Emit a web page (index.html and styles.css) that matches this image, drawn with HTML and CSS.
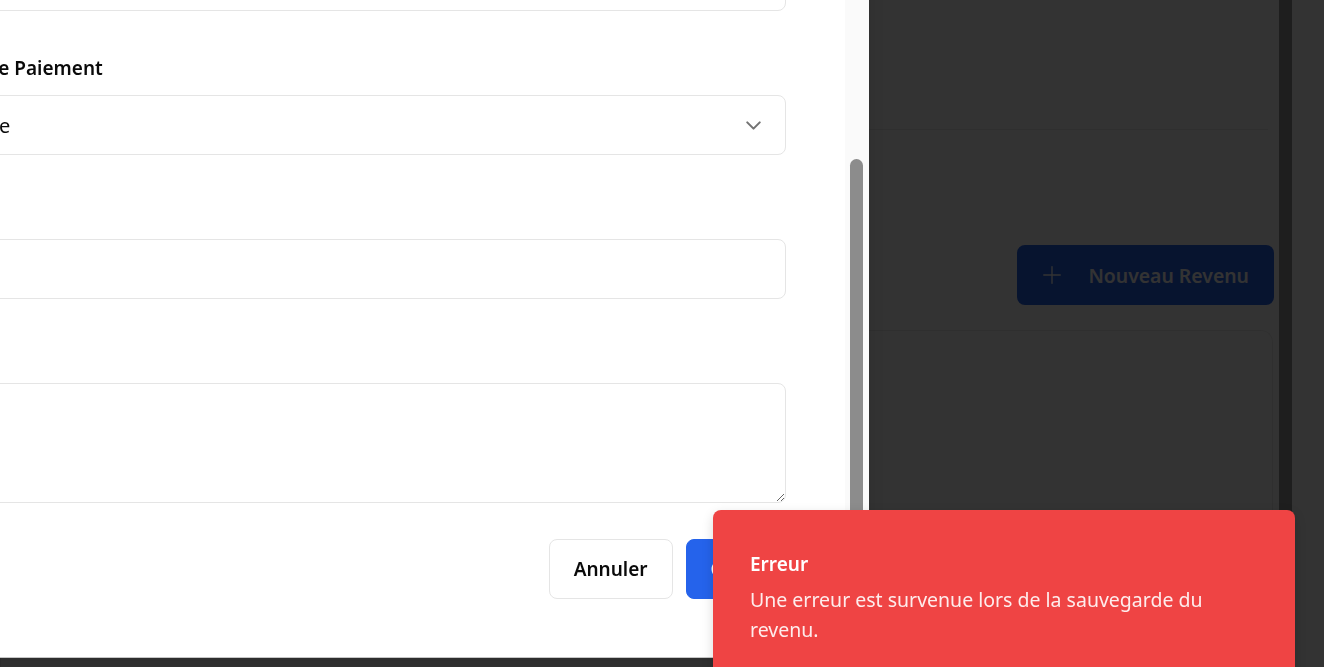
FILE: index.html
```html
<!DOCTYPE html>
<html lang="fr">
<head>
<meta charset="utf-8">
<title>Revenus</title>
<link rel="stylesheet" href="styles.css">
</head>
<body>
<div class="app">
  <main class="main">
    <div class="topbar"></div>
    <div class="toolbar">
      <button class="btn-new" type="button">
        <svg class="plus" viewBox="0 0 24 24" width="22" height="22" aria-hidden="true"><path d="M12 3v18M3 12h18"/></svg>
        <span>Nouveau Revenu</span>
      </button>
    </div>
    <div class="table-card"></div>
  </main>
  <div class="rail"></div>
  <div class="gutter"></div>
</div>

<div class="overlay"></div>

<div class="modal" role="dialog">
  <form class="form">
    <div class="field">
      <label class="label">Montant</label>
      <div class="input"></div>
    </div>
    <div class="field">
      <label class="label">Mode de Paiement</label>
      <div class="select">
        <span class="select-value">Chèque</span>
        <svg class="chevron" viewBox="0 0 24 24" width="25" height="25" aria-hidden="true"><path d="m6 9 6 6 6-6"/></svg>
      </div>
    </div>
    <div class="field">
      <label class="label">Client</label>
      <input class="input" type="text">
    </div>
    <div class="field">
      <label class="label">Notes</label>
      <textarea class="textarea"></textarea>
    </div>
    <div class="footer">
      <button class="btn btn-outline" type="button">Annuler</button>
      <button class="btn btn-primary" type="button">Créer</button>
    </div>
  </form>
  <div class="scrollbar"><div class="thumb"></div></div>
</div>

<div class="toast" role="alert">
  <div class="toast-title">Erreur</div>
  <div class="toast-desc">Une erreur est survenue lors de la sauvegarde du revenu.</div>
</div>
</body>
</html>
```

FILE: styles.css
```css
* { box-sizing: border-box; }

html, body {
  margin: 0;
  width: 1324px;
  height: 667px;
  overflow: hidden;
  font-family: "Noto Sans", "Open Sans", sans-serif;
  color: #0a0a0a;
  background: #fff;
}

/* background application */
.app {
  display: flex;
  height: 667px;
}
.main {
  flex: 1;
  display: flex;
  flex-direction: column;
}
.topbar {
  height: 130px;
  margin-right: 11px;
  border-bottom: 1px solid #e8e8e8;
}
.toolbar {
  height: 200px;
  display: flex;
  justify-content: flex-end;
  align-items: flex-start;
  padding-top: 115px;
  padding-right: 5px;
}
.btn-new {
  display: flex;
  align-items: center;
  gap: 25px;
  height: 60px;
  padding: 0 25px 0 24px;
  border: 0;
  border-radius: 8px;
  background: #2563eb;
  color: #fff;
  font-family: inherit;
  font-size: 19.4px;
  font-weight: 600;
}
.plus {
  fill: none;
  stroke: #fff;
  stroke-width: 1.5;
  stroke-linecap: round;
}
.table-card {
  flex: 1;
  margin-right: 6px;
  border: 1px solid #ececec;
  border-bottom: 0;
  border-radius: 12px 12px 0 0;
}
.rail {
  width: 13px;
  background: #969696;
}
.gutter {
  width: 32px;
  background: #fff;
}

.overlay {
  position: fixed;
  inset: 0;
  background: rgba(0, 0, 0, 0.8);
}

/* modal dialog */
.modal {
  position: absolute;
  left: -95px;
  top: -114px;
  width: 964px;
  height: 772px;
  background: #fff;
  border-bottom: 1px solid #c6c6c6;
  box-shadow: 0 10px 15px rgba(0, 0, 0, 0.1);
  overflow: hidden;
}
.form {
  display: flex;
  flex-direction: column;
  gap: 43px;
  padding: 24px 83px 0 24px;
}
.field {
  display: flex;
  flex-direction: column;
  gap: 13px;
}
.label {
  font-size: 19px;
  line-height: 28px;
  font-weight: 600;
  color: #0a0a0a;
}
.input, .select, .textarea {
  width: 100%;
  border: 1px solid #e5e5e5;
  border-radius: 8px;
  background: #fff;
  font-family: inherit;
  font-size: 20px;
}
.input { height: 60px; display: block; }
.select {
  height: 60px;
  display: flex;
  align-items: center;
  justify-content: space-between;
  padding: 0 19px 0 8px;
  color: #0a0a0a;
}
.chevron {
  fill: none;
  stroke: #737373;
  stroke-width: 2;
  stroke-linecap: round;
  stroke-linejoin: round;
}
.textarea {
  display: block;
  height: 120px;
  resize: vertical;
}
.footer {
  display: flex;
  justify-content: flex-end;
  gap: 13px;
  margin-top: -7px;
}
.btn {
  height: 60px;
  padding: 0 24px;
  border-radius: 8px;
  font-family: inherit;
  font-size: 19px;
  font-weight: 600;
}
.btn-outline {
  background: #fff;
  border: 1px solid #e5e5e5;
  color: #0a0a0a;
}
.btn-primary {
  background: #2563eb;
  border: 1px solid #2563eb;
  color: #fff;
}

.scrollbar {
  position: absolute;
  right: 0;
  top: 0;
  bottom: 0;
  width: 24px;
  background: #fafafa;
}
.thumb {
  position: absolute;
  left: 5px;
  top: 273px;
  width: 13px;
  height: 430px;
  border-radius: 7px;
  background: #8c8c8c;
}

/* toast */
.toast {
  position: absolute;
  left: 713px;
  top: 510px;
  width: 582px;
  height: 200px;
  padding: 40px 37px;
  border-radius: 8px;
  background: #ef4444;
  color: #fff;
  box-shadow: 0 4px 12px rgba(0, 0, 0, 0.15);
}
.toast-title {
  font-size: 19px;
  line-height: 28px;
  font-weight: 600;
}
.toast-desc {
  margin-top: 7px;
  font-size: 19.5px;
  line-height: 30px;
  color: rgba(255, 255, 255, 0.9);
}
```
